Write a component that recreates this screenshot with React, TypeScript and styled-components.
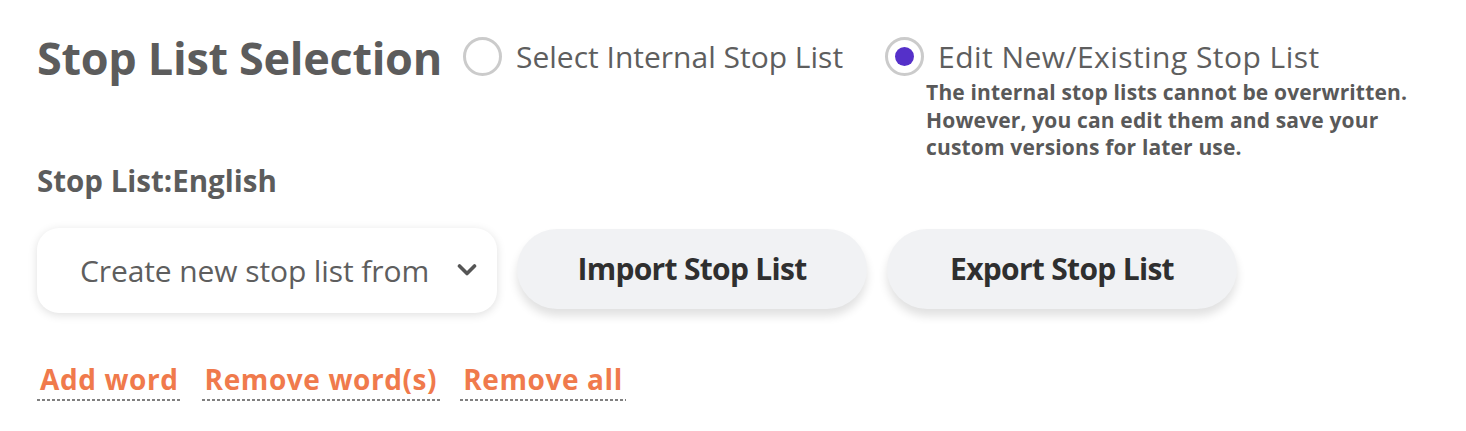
import React, { useState } from 'react';
import styled, { createGlobalStyle } from 'styled-components';

const GlobalStyle = createGlobalStyle`
  body {
    margin: 0;
    background: #fff;
    font-family: 'Open Sans', 'Lato', sans-serif;
  }
`;

const App = () => {
  const [mode, setMode] = useState<'internal' | 'edit'>('edit');

  return (
    <>
      <GlobalStyle />
      <Page>
        <HeaderRow>
          <Title>Stop List Selection</Title>
          <RadioOption>
            <RadioRow onClick={() => setMode('internal')}>
              <RadioCircle $checked={mode === 'internal'} />
              <RadioLabel>Select Internal Stop List</RadioLabel>
            </RadioRow>
          </RadioOption>
          <RadioOption $last>
            <RadioRow onClick={() => setMode('edit')}>
              <RadioCircle $checked={mode === 'edit'} />
              <RadioLabel $spread>Edit New/Existing Stop List</RadioLabel>
            </RadioRow>
            <Note>
              The internal stop lists cannot be overwritten.<br />
              However, you can edit them and save your<br />
              custom versions for later use.
            </Note>
          </RadioOption>
        </HeaderRow>

        <ListName>Stop List:English</ListName>

        <ControlsRow>
          <SelectBox>
            <SelectText>Create new stop list from</SelectText>
            <svg width="20" height="12" viewBox="0 0 20 12">
              <path d="M2.5 2 L10 9.5 L17.5 2" fill="none" stroke="#555" strokeWidth="3.6" strokeLinecap="round" strokeLinejoin="round" />
            </svg>
          </SelectBox>
          <PillButton>Import Stop List</PillButton>
          <PillButton>Export Stop List</PillButton>
        </ControlsRow>

        <LinksRow>
          <ActionLink>Add word</ActionLink>
          <ActionLink>Remove word(s)</ActionLink>
          <ActionLink>Remove all</ActionLink>
        </LinksRow>
      </Page>
    </>
  );
};

const Page = styled.div`
  padding: 30px 0 0 37px;
  color: #5b5b5b;
`;
const HeaderRow = styled.div`
  display: flex;
  align-items: flex-start;
`;
const Title = styled.h1`
  margin: -2px 21px 0 0;
  font-size: 45px;
  font-weight: 700;
  line-height: 60px;
  color: #5c5c5c;
  letter-spacing: -0.3px;
`;
const RadioOption = styled.div<{ $last?: boolean }>`
  display: flex;
  flex-direction: column;
  margin-right: ${p => (p.$last ? '0' : '42px')};
`;
const RadioRow = styled.label`
  display: flex;
  align-items: center;
  height: 52px;
  cursor: pointer;
`;
const RadioCircle = styled.span<{ $checked: boolean }>`
  box-sizing: border-box;
  width: 39px;
  height: 39px;
  border-radius: 50%;
  border: 3px solid #cbcbcb;
  display: flex;
  align-items: center;
  justify-content: center;
  margin-right: 14px;
  &::after {
    content: '';
    width: 19px;
    height: 19px;
    border-radius: 50%;
    background: ${p => (p.$checked ? '#5530c9' : 'transparent')};
  }
`;
const RadioLabel = styled.span<{ $spread?: boolean }>`
  font-size: 30px;
  font-weight: 400;
  color: #5e5e5e;
  letter-spacing: ${p => (p.$spread ? '0.45px' : '0')};
`;
const Note = styled.p`
  margin: -3px 0 0 41px;
  font-size: 21px;
  font-weight: 700;
  line-height: 27.5px;
  letter-spacing: 0.15px;
  color: #595959;
`;
const ListName = styled.div`
  margin-top: -2px;
  font-size: 29.5px;
  font-weight: 700;
  color: #5c5c5c;
`;
const ControlsRow = styled.div`
  display: flex;
  align-items: flex-start;
  gap: 20px;
  margin-top: 27px;
`;
const SelectBox = styled.div`
  box-sizing: border-box;
  width: 460px;
  height: 85px;
  border-radius: 22px;
  background: #fff;
  box-shadow: 0 2px 10px rgba(0, 0, 0, 0.13);
  display: flex;
  align-items: center;
  justify-content: space-between;
  padding: 0 20px 0 43px;
`;
const SelectText = styled.span`
  font-size: 30px;
  color: #5e5e5e;
  letter-spacing: -0.1px;
`;
const PillButton = styled.button`
  box-sizing: border-box;
  width: 350px;
  height: 80px;
  margin-top: 1px;
  border: none;
  border-radius: 40px;
  background: #f1f2f4;
  box-shadow: 0 7px 10px rgba(0, 0, 0, 0.12);
  font-family: 'Open Sans', sans-serif;
  font-size: 30px;
  font-weight: 700;
  color: #2f2f2f;
  letter-spacing: -0.7px;
  cursor: pointer;
`;
const LinksRow = styled.div`
  display: flex;
  gap: 20px;
  margin-top: 47px;
`;
const ActionLink = styled.a`
  font-size: 28px;
  font-weight: 700;
  line-height: 38px;
  color: #f07a4c;
  padding: 0 3px 3px;
  letter-spacing: 0.6px;
  background: repeating-linear-gradient(to right, #808080 0 3px, transparent 3px 5px) left bottom / 100% 2px no-repeat;
  cursor: pointer;
`;

export default App;
